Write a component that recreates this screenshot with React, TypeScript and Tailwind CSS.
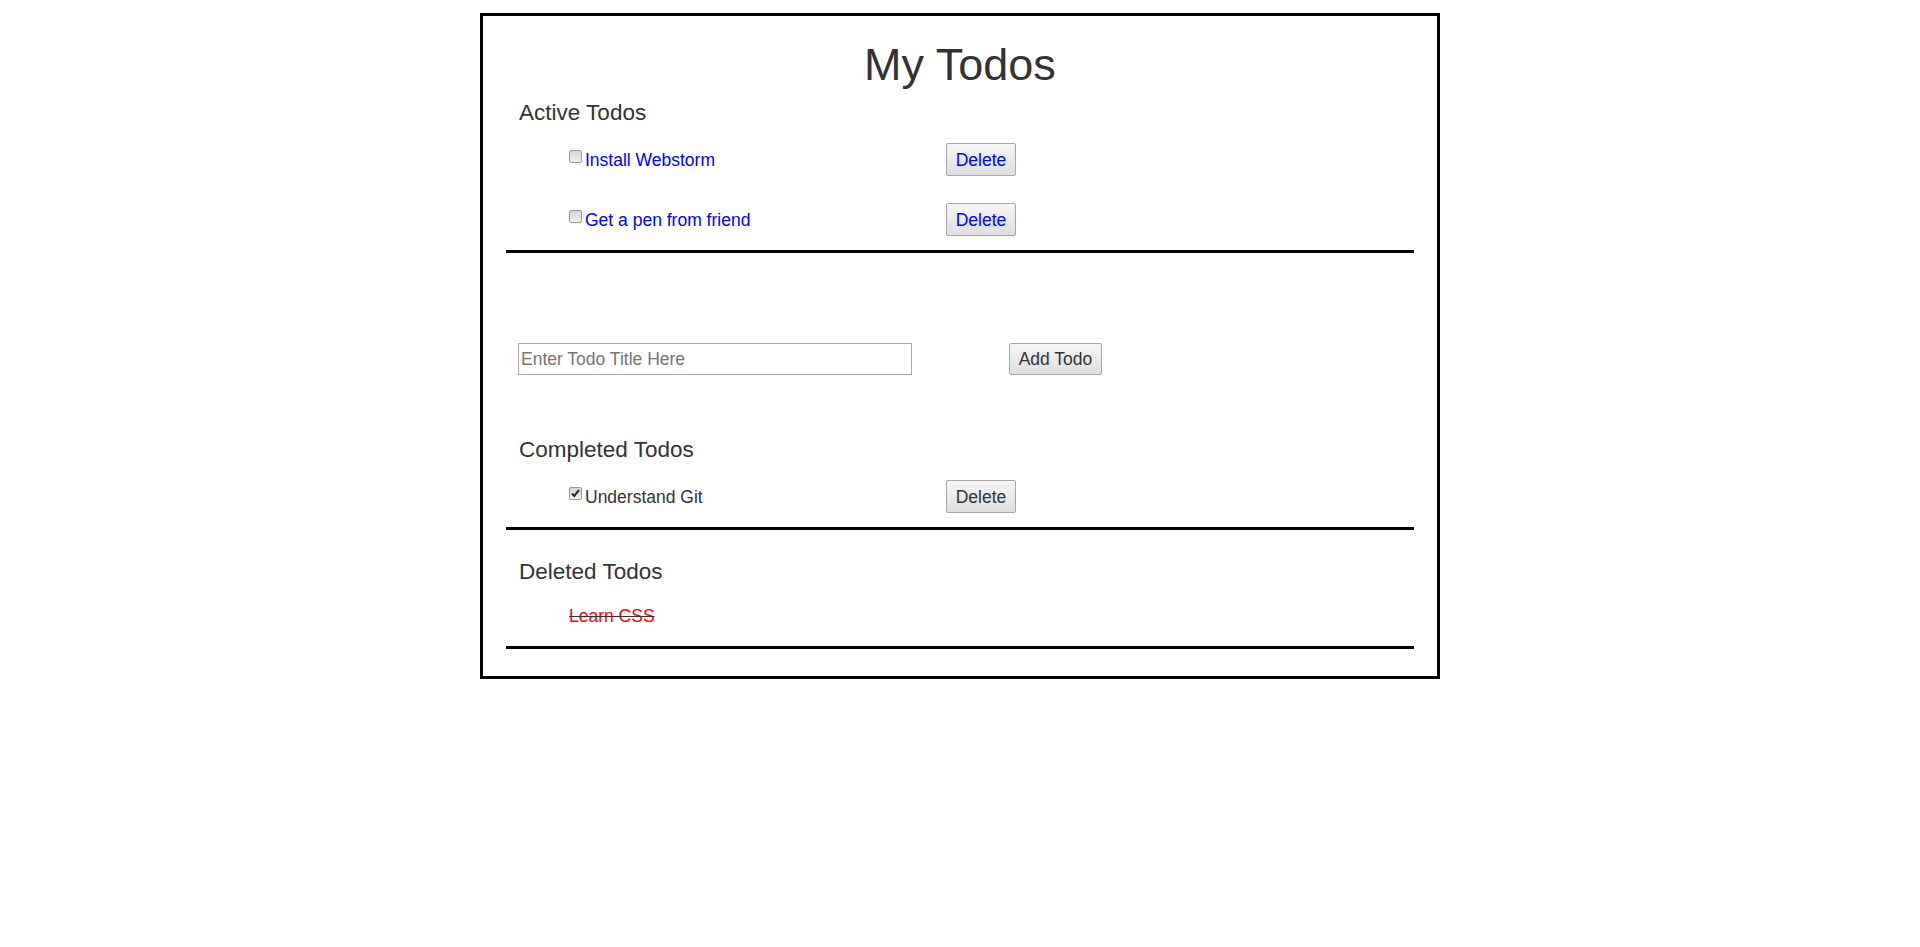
import React from 'react'

interface Todo {
  id: number
  title: string
}

const activeTodos: Todo[] = [
  { id: 1, title: 'Install Webstorm' },
  { id: 2, title: 'Get a pen from friend' },
]

const completedTodos: Todo[] = [{ id: 3, title: 'Understand Git' }]

const deletedTodos: Todo[] = [{ id: 4, title: 'Learn CSS' }]

function Checkbox({ checked }: { checked?: boolean }) {
  return (
    <span className="relative ml-[4px] mr-[3px] inline-block h-[13px] w-[13px] rounded-[2px] border border-[#9a9a9a] bg-linear-to-b from-[#d6d6d6] to-[#f0f0f0] align-[3px]">
      {checked && (
        <svg
          viewBox="0 0 13 13"
          className="absolute left-[-1px] top-[-1px] h-[13px] w-[13px]"
        >
          <path
            d="M3 6.5 L5.2 9 L10 3.2"
            fill="none"
            stroke="#222"
            strokeWidth="2"
          />
        </svg>
      )}
    </span>
  )
}

function GrayButton({
  label,
  width,
  height,
  blue,
}: {
  label: string
  width: string
  height: string
  blue?: boolean
}) {
  return (
    <button
      className={`${width} ${height} rounded-[2px] border border-[#a6a6a6] bg-linear-to-b from-[#f6f6f6] to-[#dedede] text-[17.5px] leading-[20px] ${
        blue ? 'text-[#0000ff]' : 'text-[#333]'
      }`}
    >
      {label}
    </button>
  )
}

function Divider() {
  return <div className="mx-[23px] h-[3px] bg-black" />
}

function TodoRow({ todo, done }: { todo: Todo; done?: boolean }) {
  return (
    <li className="flex h-[33px] items-center">
      <div
        className={`w-[381px] text-[17.5px] leading-[20px] ${
          done ? 'text-[#333]' : 'text-[#0000ff]'
        }`}
      >
        <Checkbox checked={done} />
        <span>{todo.title}</span>
      </div>
      <GrayButton label="Delete" width="w-[70px]" height="h-[33px]" blue={!done} />
    </li>
  )
}

export default function App() {
  return (
    <div className="min-h-screen bg-white font-['Liberation_Sans',Arial,sans-serif] text-[#333]">
      <div className="mx-auto mt-[13px] w-[960px] border-[3px] border-black pb-[27px] pt-[24px]">
        <h1 className="text-center text-[45px] leading-[49px]">My Todos</h1>

        {/* active */}
        <h3 className="mt-[11px] pl-[36px] text-[22.5px] leading-[26px]">Active Todos</h3>
        <ul className="mt-[17px] flex flex-col gap-[27px] pl-[82px]">
          {activeTodos.map((todo) => (
            <TodoRow key={todo.id} todo={todo} />
          ))}
        </ul>
        <div className="mt-[14px]">
          <Divider />
        </div>

        {/* add form */}
        <div className="mt-[90px] flex items-center pl-[35px]">
          <input
            type="text"
            placeholder="Enter Todo Title Here"
            className="h-[32px] w-[394px] border border-[#a9a9a9] px-[2px] text-[17.5px] text-[#333] outline-none placeholder:text-[#757575]"
          />
          <div className="ml-[97px]">
            <GrayButton label="Add Todo" width="w-[93px]" height="h-[32px]" />
          </div>
        </div>

        {/* completed */}
        <h3 className="mt-[62px] pl-[36px] text-[22.5px] leading-[26px]">Completed Todos</h3>
        <ul className="mt-[17px] flex flex-col gap-[27px] pl-[82px]">
          {completedTodos.map((todo) => (
            <TodoRow key={todo.id} todo={todo} done />
          ))}
        </ul>
        <div className="mt-[14px]">
          <Divider />
        </div>

        {/* deleted */}
        <h3 className="mt-[29px] pl-[36px] text-[22.5px] leading-[26px]">Deleted Todos</h3>
        <ul className="mt-[21px] pl-[86px]">
          {deletedTodos.map((todo) => (
            <li
              key={todo.id}
              className="text-[17.5px] leading-[20px] line-through decoration-[#333]"
            >
              <span className="text-[#ff0000]">{todo.title}</span>
            </li>
          ))}
        </ul>
        <div className="mt-[20px]">
          <Divider />
        </div>
      </div>
    </div>
  )
}
